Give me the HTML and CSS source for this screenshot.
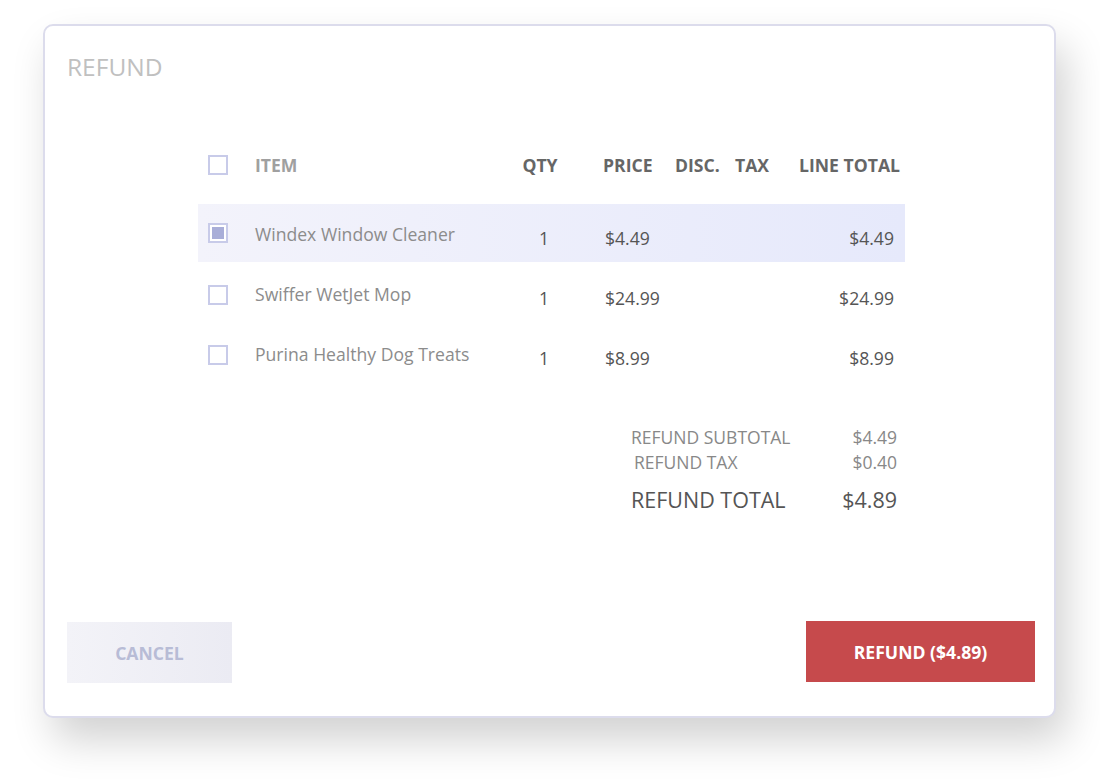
FILE: index.html
```html
<!DOCTYPE html>
<html>
<head>
<meta charset="utf-8">
<link rel="stylesheet" href="styles.css">
</head>
<body>
<div class="modal">
  <h1 class="title">REFUND</h1>
  <div class="table">
    <div class="row head">
      <div class="c-check"><span class="box"></span></div>
      <div class="c-item">ITEM</div>
      <div class="c-qty">QTY</div>
      <div class="c-price">PRICE</div>
      <div class="c-disc">DISC.</div>
      <div class="c-tax">TAX</div>
      <div class="c-total">LINE TOTAL</div>
    </div>
    <div class="row item selected">
      <div class="c-check"><span class="box checked"></span></div>
      <div class="c-item">Windex Window Cleaner</div>
      <div class="c-qty">1</div>
      <div class="c-price">$4.49</div>
      <div class="c-disc"></div>
      <div class="c-tax"></div>
      <div class="c-total">$4.49</div>
    </div>
    <div class="row item">
      <div class="c-check"><span class="box"></span></div>
      <div class="c-item">Swiffer WetJet Mop</div>
      <div class="c-qty">1</div>
      <div class="c-price">$24.99</div>
      <div class="c-disc"></div>
      <div class="c-tax"></div>
      <div class="c-total">$24.99</div>
    </div>
    <div class="row item">
      <div class="c-check"><span class="box"></span></div>
      <div class="c-item">Purina Healthy Dog Treats</div>
      <div class="c-qty">1</div>
      <div class="c-price">$8.99</div>
      <div class="c-disc"></div>
      <div class="c-tax"></div>
      <div class="c-total">$8.99</div>
    </div>
  </div>
  <div class="summary">
    <div class="sum-row"><span class="lbl">REFUND SUBTOTAL</span><span class="val">$4.49</span></div>
    <div class="sum-row tax"><span class="lbl">REFUND TAX</span><span class="val">$0.40</span></div>
    <div class="sum-row grand"><span class="lbl">REFUND TOTAL</span><span class="val">$4.89</span></div>
  </div>
  <div class="actions">
    <button class="btn cancel">CANCEL</button>
    <button class="btn refund">REFUND ($4.89)</button>
  </div>
</div>
</body>
</html>
```
FILE: styles.css
```css
html, body {
  margin: 0;
  padding: 0;
  background: #ffffff;
}
body {
  font-family: "Open Sans", "Noto Sans", sans-serif;
  padding: 24px 0 0 43px;
  min-height: 780px;
  box-sizing: border-box;
}
.modal {
  box-sizing: border-box;
  width: 1013px;
  height: 694px;
  background: #fff;
  border: 2px solid #dcdcec;
  border-radius: 10px;
  box-shadow: 10px 22px 40px rgba(0, 0, 0, 0.18);
  padding: 24px 19px 0 22px;
  display: flex;
  flex-direction: column;
}
.title {
  margin: 0;
  font-size: 24.5px;
  font-weight: 400;
  color: #c0c0c0;
  line-height: 34px;
}
.table {
  margin: 61px 0 0 131px;
  width: 707px;
}
.row {
  display: flex;
  align-items: center;
}
.row.head {
  height: 40px;
  font-weight: 700;
  font-size: 17.6px;
  color: #666;
  margin-bottom: 19px;
}
.row.head .c-item { color: #a0a0a0; }
.row.item {
  font-size: 17.6px;
  color: #555;
  height: 58px;
  padding-top: 10px;
  box-sizing: border-box;
}
.row.item + .row.item { margin-top: 2px; }
.row.selected {
  background: linear-gradient(90deg, #f3f3fb 0%, #e6e9fb 100%);
}
.row.item .c-check { margin-top: -10px; }
.row.item + .row.item .c-check { margin-top: -6px; }
.c-check { width: 57px; display: flex; padding-left: 10px; box-sizing: border-box; }
.c-item { width: 255px; color: #8c8c8c; white-space: nowrap; }
.row.item .c-item { margin-top: -8px; }
.c-qty { width: 60px; text-align: center; box-sizing: border-box; }
.row.item .c-qty { padding-left: 8px; }
.c-price { width: 105px; padding-left: 33px; box-sizing: border-box; }
.row.item .c-price { padding-left: 35px; }
.c-disc { width: 60px; }
.c-tax { width: 55px; }
.c-total { width: 115px; text-align: right; padding-right: 5px; box-sizing: border-box; white-space: nowrap; }
.row.item .c-total { padding-right: 11px; }
.box {
  width: 20px;
  height: 20px;
  box-sizing: border-box;
  border: 2px solid #c8cbe9;
  background: #fff;
  display: flex;
  align-items: center;
  justify-content: center;
}
.box.checked::after {
  content: "";
  width: 12px;
  height: 12px;
  background: #a9aed8;
}
.summary {
  margin: 43px 0 0 564px;
  width: 266px;
}
.sum-row {
  display: flex;
  justify-content: space-between;
  font-size: 17.5px;
  color: #888;
  line-height: 25px;
}
.sum-row.tax .lbl { padding-left: 3px; }
.sum-row.grand {
  font-size: 21.5px;
  color: #555;
  margin-top: 10px;
  line-height: 30px;
}
.actions {
  margin-top: auto;
  margin-bottom: 33px;
  display: flex;
  justify-content: space-between;
  align-items: flex-start;
}
.btn {
  border: none;
  font-family: inherit;
  font-weight: 700;
  font-size: 17.6px;
  padding: 0;
}
.cancel {
  width: 165px;
  height: 61px;
  margin-top: 1px;
  background: linear-gradient(90deg, #f3f3f8 0%, #ebebf3 100%);
  color: #b8bcd6;
}
.refund {
  width: 229px;
  height: 61px;
  background: #c64a4c;
  color: #fff;
}
```
